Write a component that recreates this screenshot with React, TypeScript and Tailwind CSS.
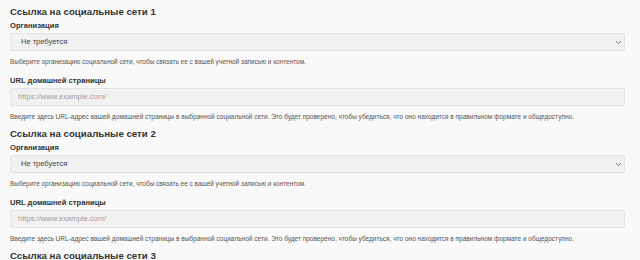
const SECTIONS = [1, 2, 3];

function Chevron() {
  return (
    <svg width="7" height="5" viewBox="0 0 7 5" className="text-[#777]">
      <path d="M1 1.2 L3.5 3.6 L6 1.2" fill="none" stroke="currentColor" strokeWidth="1" />
    </svg>
  );
}

function SocialLinkSection({ n }: { n: number }) {
  return (
    <section className="pb-[6px]">
      <h3 className="text-[9.7px] leading-[14px] font-bold text-[#333]">
        Ссылка на социальные сети {n}
      </h3>

      <label className="block mt-[2px] text-[7.6px] leading-[9px] font-bold text-[#333]">
        Организация
      </label>
      <div className="mt-[3px] h-[18px] flex items-center justify-between pl-[10px] pr-[2px] rounded-[2px] bg-[#f1f1f1] border border-[#e3e3e3] shadow-[0_1px_1px_rgba(0,0,0,0.03)]">
        <span className="text-[7.5px] text-[#444]">Не требуется</span>
        <Chevron />
      </div>
      <p className="mt-[6px] text-[6.45px] leading-[9px] text-[#555]">
        Выберите организацию социальной сети, чтобы связать ее с вашей учетной записью и контентом.
      </p>

      <label className="block mt-[10px] text-[7.6px] leading-[9px] font-bold text-[#333]">
        URL домашней страницы
      </label>
      <div className="mt-[3px] h-[18px] flex items-center pl-[7px] rounded-[2px] bg-[#f1f1f1] border border-[#e3e3e3]">
        <span className="text-[7.6px] text-[#a0a0a0]">https://www.example.com/</span>
      </div>
      <p className="mt-[6px] text-[6.5px] leading-[9px] text-[#555]">
        Введите здесь URL-адрес вашей домашней страницы в выбранной социальной сети. Это будет проверено, чтобы убедиться, что оно находится в правильном формате и общедоступно.
      </p>
    </section>
  );
}

export default function App() {
  return (
    <div className="w-[640px] h-[260px] overflow-hidden bg-[#f9f9f9] pl-[10px] pr-[15px] pt-[5px] font-['Liberation_Sans',Arial,sans-serif]">
      {SECTIONS.map(n => (
        <SocialLinkSection key={n} n={n} />
      ))}
    </div>
  );
}
